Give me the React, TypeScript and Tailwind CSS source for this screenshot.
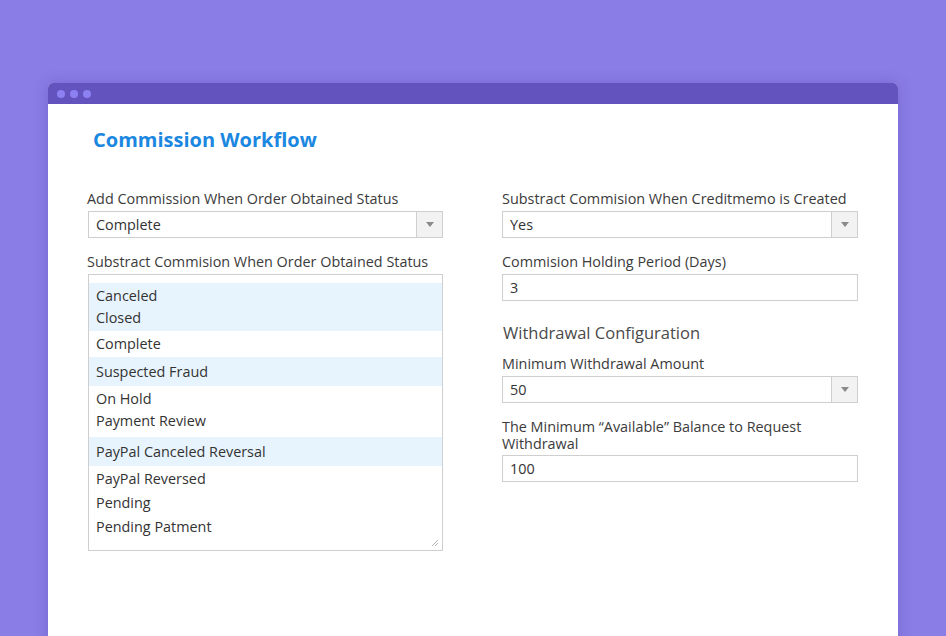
const font = { fontFamily: '"Open Sans", "Noto Sans", sans-serif' };

const statusGroups: { items: string[]; selected: boolean; cls: string }[] = [
  { items: ["Canceled", "Closed"], selected: true, cls: "h-[48px] pt-[2px] leading-[22px]" },
  { items: ["Complete"], selected: false, cls: "h-[26px] leading-[26px]" },
  { items: ["Suspected Fraud"], selected: true, cls: "h-[29px] leading-[29px]" },
  { items: ["On Hold", "Payment Review"], selected: false, cls: "h-[51px] pt-[2px] leading-[22px]" },
  { items: ["PayPal Canceled Reversal"], selected: true, cls: "h-[29px] leading-[29px]" },
  { items: ["PayPal Reversed", "Pending", "Pending Patment"], selected: false, cls: "pt-[1px] leading-[24px]" },
];

function Label({ children, className = "" }: { children: React.ReactNode; className?: string }) {
  return (
    <div className={`text-[14.4px] leading-[20px] text-[#3b3b3b] mb-[2px] ${className}`}>{children}</div>
  );
}

function Select({ value }: { value: string }) {
  return (
    <div className="h-[27px] border border-[#cfcfcf] bg-white flex items-stretch">
      <div className="flex-1 pl-[7px] text-[14.4px] leading-[25px] text-[#333]">{value}</div>
      <div className="w-[26px] bg-[#f2f2f2] border-l border-[#cfcfcf] flex items-center justify-center">
        <svg width="8" height="5" viewBox="0 0 8 5">
          <path d="M0 0 L8 0 L4 5 Z" fill="#8a8a8a" />
        </svg>
      </div>
    </div>
  );
}

function Input({ value }: { value: string }) {
  return (
    <div className="h-[27px] border border-[#cfcfcf] bg-white pl-[7px] text-[14.4px] leading-[25px] text-[#333]">
      {value}
    </div>
  );
}

export default function App() {
  return (
    <div className="w-[946px] h-[636px] overflow-hidden bg-[#8a7de5] pt-[83px] px-[48px]" style={font}>
      <div className="h-[560px] bg-white rounded-t-[5px] overflow-hidden shadow-[0_0_14px_rgba(60,40,150,0.25)]">
        <div className="h-[21px] bg-[#6253bf] flex items-center gap-[5px] pl-[9px]">
          <span className="w-[8px] h-[8px] rounded-full bg-[#8d80f2]" />
          <span className="w-[8px] h-[8px] rounded-full bg-[#8d80f2]" />
          <span className="w-[8px] h-[8px] rounded-full bg-[#8d80f2]" />
        </div>

        <div className="px-[40px]">
          <h1 className="mt-[22px] ml-[5px] text-[20px] leading-[28px] font-bold text-[#1b87e0]">
            Commission Workflow
          </h1>

          <div className="mt-[35px] flex gap-[59px]">
            <div className="w-[355px]">
              <Label className="-ml-[1px]">Add Commission When Order Obtained Status</Label>
              <Select value="Complete" />
              <Label className="mt-[14px] -ml-[1px]">Substract Commision When Order Obtained Status</Label>
              <div className="relative h-[277px] border border-[#cfcfcf] bg-white pt-[8px] text-[14.4px] text-[#333]">
                {statusGroups.map((g, i) => (
                  <div key={i} className={`${g.cls} pl-[7px] ${g.selected ? "bg-[#e8f4fd]" : ""}`}>
                    {g.items.map((t) => (
                      <div key={t}>{t}</div>
                    ))}
                  </div>
                ))}
                <svg className="absolute right-[3px] bottom-[3px]" width="8" height="8" viewBox="0 0 8 8">
                  <path d="M7 1 L1 7 M7 4 L4 7" stroke="#b5b5b5" strokeWidth="1" />
                </svg>
              </div>
            </div>

            <div className="w-[356px]">
              <Label>Substract Commision When Creditmemo is Created</Label>
              <Select value="Yes" />
              <Label className="mt-[14px]">Commision Holding Period (Days)</Label>
              <Input value="3" />
              <div className="mt-[20px] ml-[1px] text-[16.5px] leading-[24px] font-medium text-[#4a4a4a]">
                Withdrawal Configuration
              </div>
              <Label className="mt-[9px]">Minimum Withdrawal Amount</Label>
              <Select value="50" />
              <div className="mt-[15px] mb-[3px] text-[14.4px] leading-[17px] text-[#3b3b3b]">
                The Minimum “Available” Balance to Request
                <br />
                Withdrawal
              </div>
              <Input value="100" />
            </div>
          </div>
        </div>
      </div>
    </div>
  );
}
